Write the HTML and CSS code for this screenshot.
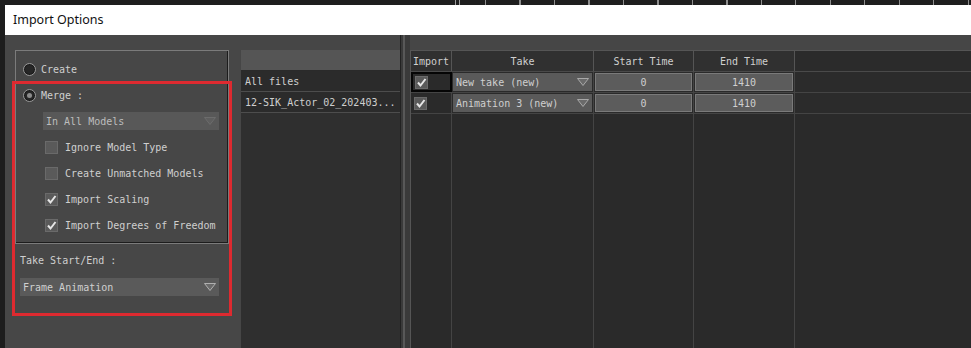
FILE: index.html
```html
<!DOCTYPE html>
<html>
<head>
<meta charset="utf-8">
<link rel="stylesheet" href="styles.css">
</head>
<body>
<div class="ruler"><div class="ruler-gap"></div><div class="ruler-ticks"></div></div>
<div class="frame">
  <div class="strip"></div>
  <div class="window">
    <div class="titlebar">Import Options</div>
    <div class="content">
      <div class="options">
        <div class="group">
          <div class="row"><span class="radio"></span><span class="lbl">Create</span></div>
          <div class="row"><span class="radio on"></span><span class="lbl">Merge :</span></div>
          <div class="row"><div class="select dim"><span>In All Models</span><svg class="arrow" width="12" height="8" viewBox="0 0 12 8"><polygon points="0.5,0.5 11.5,0.5 6,7.5" fill="#5e5e5e" stroke="#6c6c6c"/></svg></div></div>
          <div class="row indent"><span class="check"></span><span class="lbl">Ignore Model Type</span></div>
          <div class="row indent"><span class="check"></span><span class="lbl">Create Unmatched Models</span></div>
          <div class="row indent"><span class="check"><svg width="11" height="11" viewBox="0 0 11 11"><path d="M2 5.5 L4.5 8.5 L9.5 2" fill="none" stroke="#e6e6e6" stroke-width="2"/></svg></span><span class="lbl">Import Scaling</span></div>
          <div class="row indent"><span class="check"><svg width="11" height="11" viewBox="0 0 11 11"><path d="M2 5.5 L4.5 8.5 L9.5 2" fill="none" stroke="#e6e6e6" stroke-width="2"/></svg></span><span class="lbl">Import Degrees of Freedom</span></div>
        </div>
        <div class="take-label">Take Start/End :</div>
        <div class="select wide"><span>Frame Animation</span><svg class="arrow" width="12" height="8" viewBox="0 0 12 8"><polygon points="0.5,0.5 11.5,0.5 6,7.5" fill="#6a6a6a" stroke="#b0b0b0"/></svg></div>
        <div class="highlight"></div>
      </div>
      <div class="files">
        <div class="files-head"></div>
        <div class="file-row">All files</div>
        <div class="file-row">12-SIK_Actor_02_202403...</div>
      </div>
      <div class="splitter"><span class="sp-line"></span></div>
      <div class="table">
        <div class="trow thead">
          <div class="c c-imp">Import</div>
          <div class="c c-take">Take</div>
          <div class="c c-st">Start Time</div>
          <div class="c c-et">End Time</div>
          <div class="c c-rest"></div>
        </div>
        <div class="trow">
          <div class="c c-imp focus"><span class="check small"><svg width="11" height="11" viewBox="0 0 11 11"><path d="M2 5.5 L4.5 8.5 L9.5 2" fill="none" stroke="#e6e6e6" stroke-width="2"/></svg></span></div>
          <div class="c c-take"><div class="cell-select"><span>New take (new)</span><svg class="arrow" width="12" height="8" viewBox="0 0 12 8"><polygon points="0.5,0.5 11.5,0.5 6,7.5" fill="#6a6a6a" stroke="#a8a8a8"/></svg></div></div>
          <div class="c c-st"><div class="num">0</div></div>
          <div class="c c-et"><div class="num">1410</div></div>
          <div class="c c-rest"></div>
        </div>
        <div class="trow">
          <div class="c c-imp"><span class="check small"><svg width="11" height="11" viewBox="0 0 11 11"><path d="M2 5.5 L4.5 8.5 L9.5 2" fill="none" stroke="#e6e6e6" stroke-width="2"/></svg></span></div>
          <div class="c c-take"><div class="cell-select"><span>Animation 3 (new)</span><svg class="arrow" width="12" height="8" viewBox="0 0 12 8"><polygon points="0.5,0.5 11.5,0.5 6,7.5" fill="#6a6a6a" stroke="#a8a8a8"/></svg></div></div>
          <div class="c c-st"><div class="num">0</div></div>
          <div class="c c-et"><div class="num">1410</div></div>
          <div class="c c-rest"></div>
        </div>
        <div class="trow tfill">
          <div class="c c-imp"></div>
          <div class="c c-take"></div>
          <div class="c c-st"></div>
          <div class="c c-et"></div>
          <div class="c c-rest"></div>
        </div>
      </div>
    </div>
  </div>
</div>
</body>
</html>
```
FILE: styles.css
```css
* { box-sizing: border-box; }
html, body { margin: 0; padding: 0; }
body {
  width: 971px;
  height: 348px;
  overflow: hidden;
  background: #1d1d1d;
  font-family: "DejaVu Sans Mono", "Liberation Mono", monospace;
  font-size: 10px;
  color: #cfcfcf;
}
.ruler { height: 5px; display: flex; background: #1e1e1e; }
.ruler-gap {
  width: 485px;
  background:
    linear-gradient(to right, transparent 455px, #9c9c9c 455px 456px, transparent 456px 459px, #9c9c9c 459px 460px, transparent 460px);
}
.ruler-ticks {
  flex: 1;
  background: repeating-linear-gradient(to right, #8e8e8e 0 1px, transparent 1px 34.5px);
}
.frame { display: flex; height: 343px; }
.strip { width: 5px; background: #1d1d1d; }
.window { flex: 1; display: flex; flex-direction: column; }
.titlebar {
  height: 30px;
  background: #ffffff;
  color: #111;
  font-family: "Noto Sans", "Open Sans", sans-serif;
  font-size: 12.5px;
  padding-left: 8px;
  display: flex;
  align-items: center;
  padding-bottom: 1px;
}
.content {
  flex: 1;
  display: flex;
  background: #464646;
  padding-top: 15px;
}
.options {
  position: relative;
  width: 235px;
  margin-top: -15px;
  padding: 15px 0 0 10px;
  background: #474747;
}
.group {
  width: 214px;
  height: 194px;
  border: 1px solid #7b7b7b;
  box-shadow: inset -1px -1px 0 #1c1c1c;
  padding: 5px 0 0 7px;
}
.row { height: 26px; display: flex; align-items: center; }
.row.indent { padding-left: 22px; }
.radio {
  width: 13px; height: 13px;
  border-radius: 50%;
  border: 1px solid #9a9a9a;
  background: #262626;
  box-shadow: inset 0 0 0 1px #1a1a1a;
  display: flex; align-items: center; justify-content: center;
}
.radio.on::after {
  content: "";
  width: 5px; height: 5px;
  border-radius: 50%;
  background: #8c8c8c;
}
.lbl { margin-left: 5px; white-space: pre; }
.indent .lbl { margin-left: 7px; }
.check {
  width: 13px; height: 13px;
  background: #5a5a5a;
  border: 1px solid #6a6a6a;
  display: flex; align-items: center; justify-content: center;
}
.check svg { display: block; }
.select {
  height: 18px;
  display: flex;
  align-items: center;
  justify-content: space-between;
  background: #5a5a5a;
  padding: 0 3px 0 3px;
  white-space: pre;
}
.select.dim {
  width: 176px;
  margin-left: 20px;
  background: #585858;
  color: #bdbdbd;
}
.take-label { margin: 8px 0 0 5px; height: 18px; line-height: 18px; }
.select.wide { width: 199px; margin: 8px 0 0 5px; color: #d0d0d0; }
.arrow { display: block; }
.highlight {
  position: absolute;
  left: 7px; top: 46px;
  width: 220px; height: 235px;
  border: 3px solid #de2a30;
  pointer-events: none;
}
.files {
  width: 159px;
  margin-left: 1px;
  background: #2f2f2f;
}
.files-head { height: 21px; background: #555555; border-bottom: 1px solid #2a2a2a; }
.file-row {
  height: 21px;
  background: #2b2b2b;
  border-bottom: 1px solid #4d4d4d;
  padding: 0 4px;
  display: flex; align-items: center;
  white-space: pre;
}
.splitter {
  width: 10px;
  margin-top: -15px;
  background: #3a3a3a;
  border-left: 1px solid #222;
  display: flex;
}
.sp-line { width: 2px; margin-left: 2px; background: #585858; }
.table {
  flex: 1;
  display: flex;
  flex-direction: column;
  background: #2a2a2a;
  border-left: 1px solid #555;
}
.trow { display: flex; height: 21px; border-bottom: 1px solid #444; }
.trow.thead { height: 22px; background: #303030; border-top: 1px solid #555; border-bottom: 1px solid #4a4a4a; }
.trow.tfill { flex: 1; border-bottom: none; }
.c {
  display: flex; align-items: center; justify-content: center;
  border-right: 1px solid #444;
  white-space: pre;
}
.thead .c { border-right-color: #555; }
.c-imp { width: 41px; justify-content: flex-start; padding-left: 3px; }
.thead .c-imp { justify-content: center; padding-left: 0; }
.c-take { width: 142px; padding: 1px; }
.c-st { width: 100px; padding: 1px; }
.c-et { width: 101px; padding: 1px; }
.c-rest { flex: 1; border-right: none; background: #2b2b2b; }
.tfill .c-rest { background: #2a2a2a; }
.focus { border: 2px solid #050505; padding-left: 2px; }
.check.small { width: 13px; height: 13px; }
.cell-select {
  width: 100%; height: 100%;
  background: #5a5a5a;
  display: flex; align-items: center; justify-content: space-between;
  padding: 0 3px 0 3px;
}
.num {
  width: 100%; height: 100%;
  background: #5c5c5c;
  border: 1px solid #7a7a7a;
  display: flex; align-items: center; justify-content: center;
}
```
